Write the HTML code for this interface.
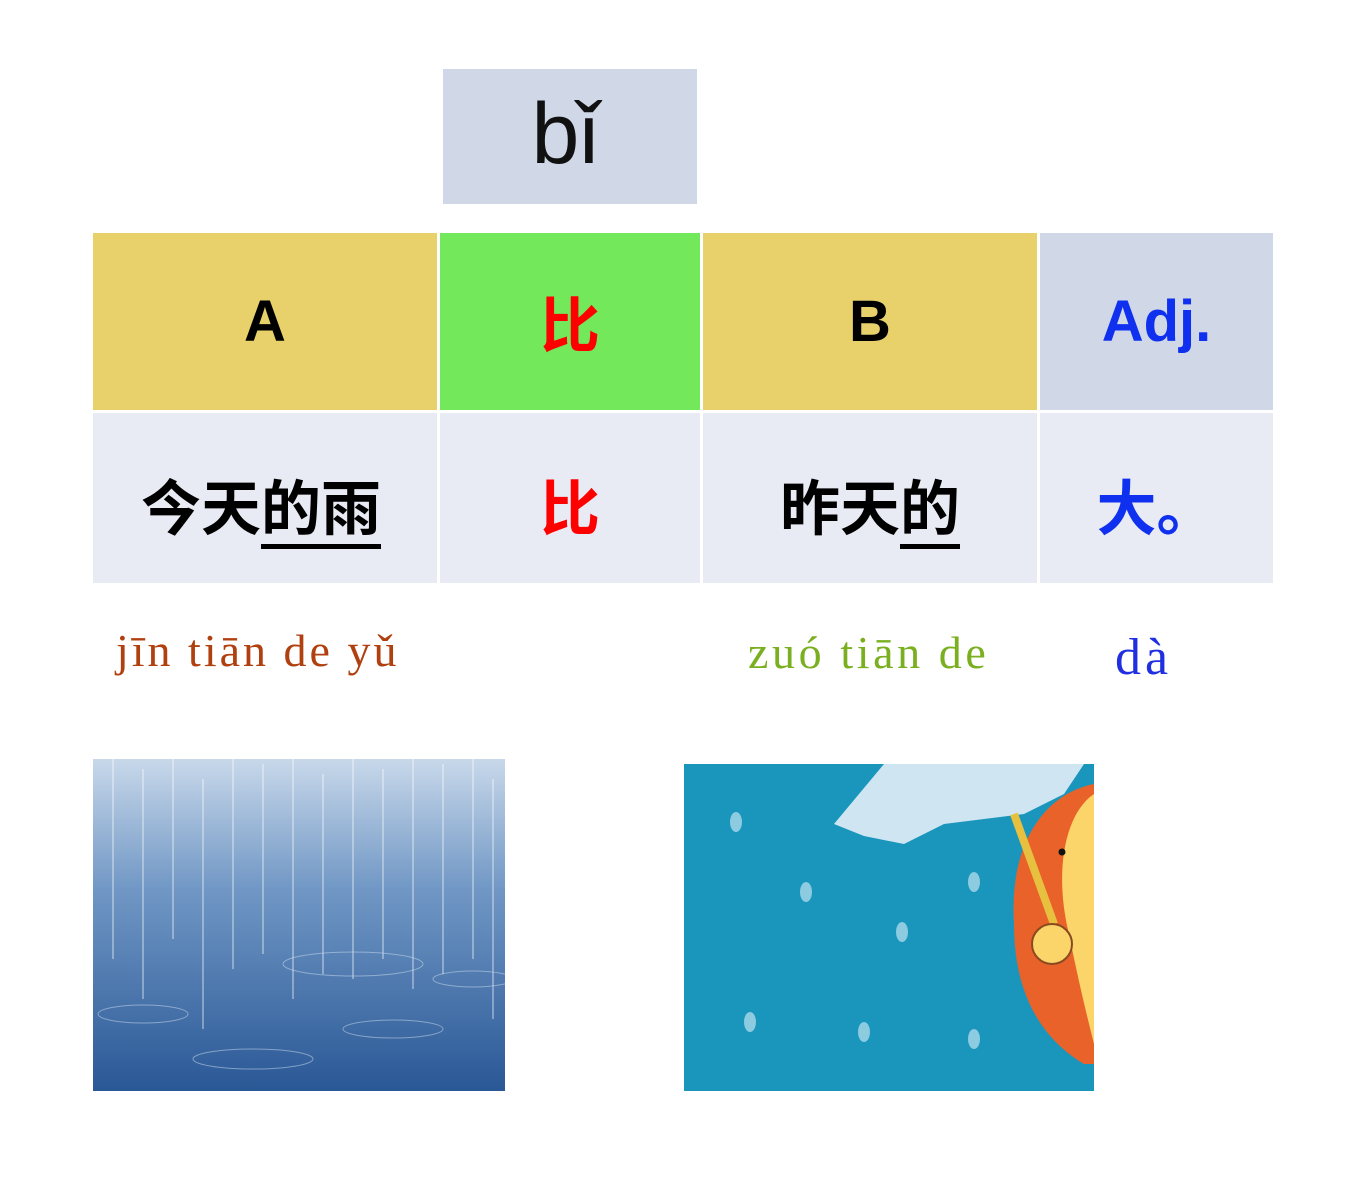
<!DOCTYPE html>
<html><head><meta charset="utf-8"><style>
body{margin:0;width:1358px;height:1190px;background:#fff;position:relative;overflow:hidden;font-family:"Liberation Sans","Noto Sans CJK SC",sans-serif}
.a{position:absolute;display:flex;align-items:center;justify-content:center;box-sizing:border-box}
.cj{font-family:"Noto Sans CJK SC",sans-serif;font-weight:bold;font-size:60px}
.py{position:absolute;font-family:"Liberation Serif",serif;font-size:46px;white-space:nowrap;letter-spacing:3px}
</style></head><body>
<div class="a" style="left:443px;top:69px;width:254px;height:135px;background:#d0d8e8;font-size:86px;color:#111;padding-bottom:4px;padding-right:10px">bǐ</div>

<div class="a" style="left:93px;top:233px;width:344px;height:177px;background:#e8d06a;font-size:58px;font-weight:bold">A</div>
<div class="a cj" style="left:440px;top:233px;width:260px;height:177px;background:#72e85a;color:#f00">比</div>
<div class="a" style="left:703px;top:233px;width:334px;height:177px;background:#e8d06a;font-size:58px;font-weight:bold">B</div>
<div class="a" style="left:1040px;top:233px;width:233px;height:177px;background:#d0d8e8;font-size:58px;font-weight:bold;color:#1030f0">Adj.</div>

<div class="a cj" style="left:93px;top:413px;width:344px;height:170px;background:#e8ebf3;color:#000;padding-top:12px;padding-right:8px"><span>今天<span style="text-decoration:underline;text-decoration-thickness:5px;text-underline-offset:14px">的雨</span></span></div>
<div class="a cj" style="left:440px;top:413px;width:260px;height:170px;background:#e8ebf3;color:#f00;padding-top:12px">比</div>
<div class="a cj" style="left:703px;top:413px;width:334px;height:170px;background:#e8ebf3;color:#000;padding-top:12px"><span>昨天<span style="text-decoration:underline;text-decoration-thickness:5px;text-underline-offset:14px">的</span></span></div>
<div class="a cj" style="left:1040px;top:413px;width:233px;height:170px;background:#e8ebf3;color:#1030f0;padding-top:12px">大。</div>

<div class="py" style="left:116px;top:624px;color:#b04010">jīn tiān de yǔ</div>
<div class="py" style="left:748px;top:626px;color:#7ab020;letter-spacing:3.6px">zuó tiān de</div>
<div class="py" style="left:1115px;top:628px;color:#2030e0;font-size:52px;letter-spacing:4px">dà</div>

<svg style="position:absolute;left:93px;top:759px" width="412" height="332">
<defs><linearGradient id="g" x1="0" y1="0" x2="0" y2="1"><stop offset="0" stop-color="#c8d8ea"/><stop offset=".4" stop-color="#6f96c4"/><stop offset="1" stop-color="#2a5896"/></linearGradient></defs>
<rect width="412" height="332" fill="url(#g)"/>
<g stroke="#fff" stroke-opacity=".35" stroke-width="2">
<path d="M20 0v200M50 10v230M80 0v180M110 20v250M140 0v210M170 5v190M200 0v240M230 15v200M260 0v220M290 10v190M320 0v230M350 5v210M380 0v200M400 20v240"/></g>
<g fill="none" stroke="#cfe0f0" stroke-opacity=".5"><ellipse cx="260" cy="205" rx="70" ry="12"/><ellipse cx="50" cy="255" rx="45" ry="9"/><ellipse cx="300" cy="270" rx="50" ry="9"/><ellipse cx="160" cy="300" rx="60" ry="10"/><ellipse cx="380" cy="220" rx="40" ry="8"/></g>
</svg>

<svg style="position:absolute;left:684px;top:764px" width="410" height="327">
<rect width="410" height="327" fill="#1a96bd"/>
<path d="M200 0 L150 60 L180 72 L220 80 L260 60 L300 55 L340 50 L380 30 L400 0Z" fill="#cfe6f2"/>
<path d="M410 20 C360 30 325 80 330 160 C330 220 350 270 400 300 L410 300Z" fill="#e8622a"/>
<path d="M410 30 C380 50 370 110 385 170 C395 220 405 260 410 280Z" fill="#fbd46a"/>
<circle cx="378" cy="88" r="3.5" fill="#111"/>
<path d="M330 50 L370 160" stroke="#e8c040" stroke-width="8"/>
<circle cx="368" cy="180" r="20" fill="#fbd46a" stroke="#8a4a20" stroke-width="2"/>
<g fill="#8ccbe0"><ellipse cx="52" cy="58" rx="6" ry="10"/><ellipse cx="122" cy="128" rx="6" ry="10"/><ellipse cx="290" cy="118" rx="6" ry="10"/><ellipse cx="218" cy="168" rx="6" ry="10"/><ellipse cx="66" cy="258" rx="6" ry="10"/><ellipse cx="180" cy="268" rx="6" ry="10"/><ellipse cx="290" cy="275" rx="6" ry="10"/></g>
</svg>
</body></html>
